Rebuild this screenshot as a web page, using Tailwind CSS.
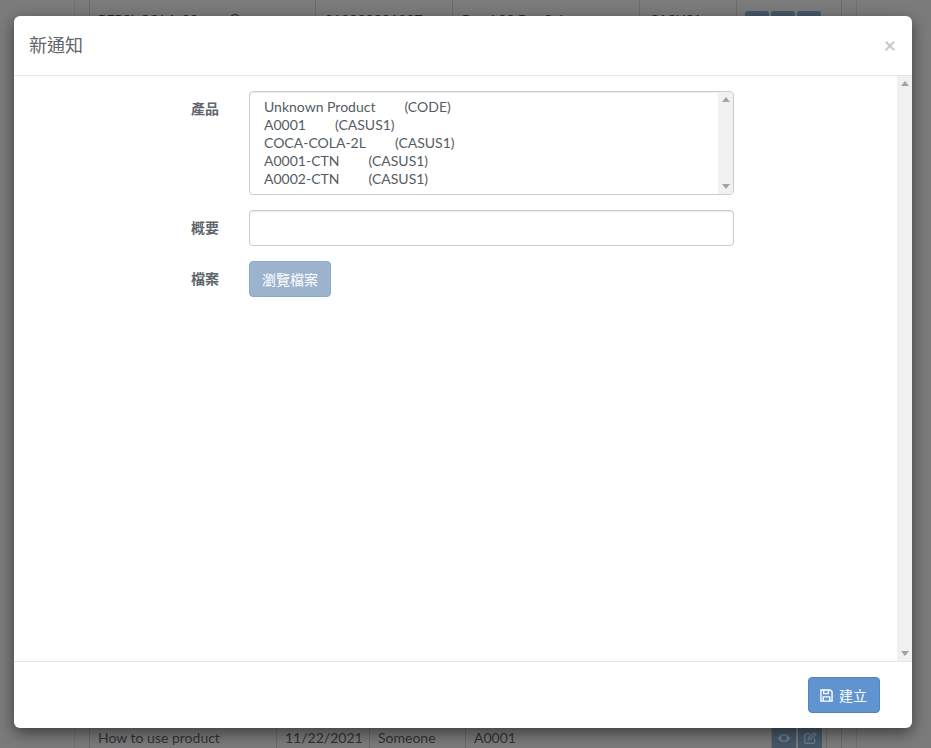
<!DOCTYPE html>
<html lang="en">
<head>
    <meta charset="UTF-8">
    <title>新通知</title>
    <script src="https://cdn.jsdelivr.net/npm/@tailwindcss/browser@4"></script>
</head>
<body class="h-[748px] w-[931px] overflow-hidden bg-[#7b7b7b] font-['Lato','Noto_Sans_CJK_TC',sans-serif] text-[14px] text-[#2f333a]">

    <!-- page behind the modal -->
    <div class="mx-[74px] flex h-[748px] flex-col justify-between border-x border-[#707070] pl-[14px] pr-[14px]">
        <div class="flex h-[30px] border-x border-[#6c6c6c] text-[#25282c]">
            <div class="flex w-[226px] items-start gap-[31px] border-r border-[#6c6c6c] pl-[8px] pt-[9px]">
                <span>PEPSI-COLA-20</span>
                <svg class="mt-[4px] h-[12px] w-[12px] text-[#33373c]" viewBox="0 0 12 12" fill="none" stroke="currentColor" stroke-width="1.500"><circle cx="6" cy="6" r="4.500"/></svg>
            </div>
            <div class="w-[137px] border-r border-[#6c6c6c] pl-[9px] pt-[9px]">012000001307</div>
            <div class="w-[187px] border-r border-[#6c6c6c] pl-[9px] pt-[9px]">Pepsi 20 Bar Cola</div>
            <div class="w-[97px] border-r border-[#6c6c6c] pl-[9px] pt-[9px]">CASUS1</div>
            <div class="flex gap-[2px] pl-[8px] pt-[11px]">
                <span class="h-[20px] w-[24px] rounded-[3px] bg-[#46576a]"></span>
                <span class="h-[20px] w-[24px] rounded-[3px] bg-[#46576a]"></span>
                <span class="h-[20px] w-[24px] rounded-[3px] bg-[#46576a]"></span>
            </div>
        </div>
        <div class="flex h-[20px] border-x border-[#6c6c6c] leading-[20px]">
            <div class="w-[187px] border-r border-[#6c6c6c] pl-[8px]">How to use product</div>
            <div class="w-[93px] border-r border-[#6c6c6c] pl-[8px]">11/22/2021</div>
            <div class="w-[96px] border-r border-[#6c6c6c] pl-[8px]">Someone</div>
            <div class="w-[306px] border-r border-[#6c6c6c] pl-[8px]">A0001</div>
            <div class="flex gap-[2px] border-r border-[#6c6c6c] pr-[4px]">
                <span class="flex w-[24px] items-center justify-center bg-[#46576a]">
                    <svg class="h-[14px] w-[14px] text-[#6b7a8a]" viewBox="0 0 24 24" fill="currentColor"><path d="M12 5C6.500 5 2.500 9 1 12c1.500 3 5.500 7 11 7s9.500-4 11-7c-1.500-3-5.500-7-11-7zm0 11.500a4.500 4.500 0 1 1 0-9 4.500 4.500 0 0 1 0 9z"/></svg>
                </span>
                <span class="flex w-[24px] items-center justify-center bg-[#46576a]">
                    <svg class="h-[14px] w-[14px] text-[#6b7a8a]" viewBox="0 0 24 24" fill="none" stroke="currentColor" stroke-width="2.500"><path d="M20 13v6a2 2 0 0 1-2 2H5a2 2 0 0 1-2-2V7a2 2 0 0 1 2-2h7"/><path d="M9 15l1-4 9-8 3 3-9 8z"/></svg>
                </span>
            </div>
        </div>
    </div>

    <!-- modal -->
    <div class="absolute left-[14px] top-[16px] flex h-[712px] w-[898px] flex-col rounded-[6px] bg-white shadow-[0_5px_15px_rgba(0,0,0,0.5)]">
        <div class="flex h-[60px] shrink-0 items-center justify-between border-b border-[#e5e5e5] pl-[15px] pr-[16px]">
            <h4 class="text-[18px] text-[#5f666d]">新通知</h4>
            <span class="-mt-[2px] text-[21px] font-bold leading-none text-[#c8c8c8]">×</span>
        </div>

        <div class="flex min-h-0 flex-1">
            <div class="flex-1 pt-[15px] text-[#555c63]">
                <div class="flex">
                    <label class="w-[235px] pr-[30px] pt-[7px] text-right font-bold text-[#5f666d]">產品</label>
                    <div class="flex h-[104px] w-[485px] overflow-hidden rounded-[4px] border border-[#ccc] shadow-[inset_0_1px_1px_rgba(0,0,0,0.075)]">
                        <div class="flex-1 pl-[14px] pt-[6px] leading-[18px]">
                            <div>Unknown Product<span class="inline-block w-[29px]"></span>(CODE)</div>
                            <div>A0001<span class="inline-block w-[29px]"></span>(CASUS1)</div>
                            <div>COCA-COLA-2L<span class="inline-block w-[29px]"></span>(CASUS1)</div>
                            <div>A0001-CTN<span class="inline-block w-[29px]"></span>(CASUS1)</div>
                            <div>A0002-CTN<span class="inline-block w-[29px]"></span>(CASUS1)</div>
                        </div>
                        <div class="flex w-[15px] flex-col items-center justify-between bg-[#f1f1f1] py-[5px]">
                            <span class="h-0 w-0 border-x-[4px] border-b-[5px] border-x-transparent border-b-[#a3a3a3]"></span>
                            <span class="h-0 w-0 border-x-[4px] border-t-[5px] border-x-transparent border-t-[#a3a3a3]"></span>
                        </div>
                    </div>
                </div>
                <div class="mt-[15px] flex">
                    <label class="w-[235px] pr-[30px] pt-[7px] text-right font-bold text-[#5f666d]">概要</label>
                    <div class="h-[36px] w-[485px] rounded-[4px] border border-[#ccc] shadow-[inset_0_1px_1px_rgba(0,0,0,0.075)]"></div>
                </div>
                <div class="mt-[15px] flex">
                    <label class="w-[235px] pr-[30px] pt-[7px] text-right font-bold text-[#5f666d]">檔案</label>
                    <button class="h-[36px] w-[82px] rounded-[4px] border border-[#8fa9c6] bg-[#9cb3cd] text-white">瀏覽檔案</button>
                </div>
            </div>
            <div class="flex w-[15px] flex-col items-center justify-between bg-[#f1f1f1] py-[5px]">
                <span class="h-0 w-0 border-x-[4px] border-b-[5px] border-x-transparent border-b-[#a3a3a3]"></span>
                <span class="h-0 w-0 border-x-[4px] border-t-[5px] border-x-transparent border-t-[#a3a3a3]"></span>
            </div>
        </div>

        <div class="flex h-[67px] shrink-0 items-start justify-end border-t border-[#e5e5e5] pr-[32px] pt-[15px]">
            <button class="flex h-[36px] w-[72px] items-center justify-center gap-[6px] rounded-[4px] border border-[#5585bd] bg-[#6094d0] pr-[1px] text-white">
                <svg class="h-[13px] w-[13px]" viewBox="0 0 14 14" fill="none" stroke="currentColor" stroke-width="1.500"><path d="M1 1h10l2 2v10H1z"/><path d="M4 1v4h5V1"/><path d="M3.500 13V8.500h7V13"/></svg>
                <span>建立</span>
            </button>
        </div>
    </div>
</body>
</html>
